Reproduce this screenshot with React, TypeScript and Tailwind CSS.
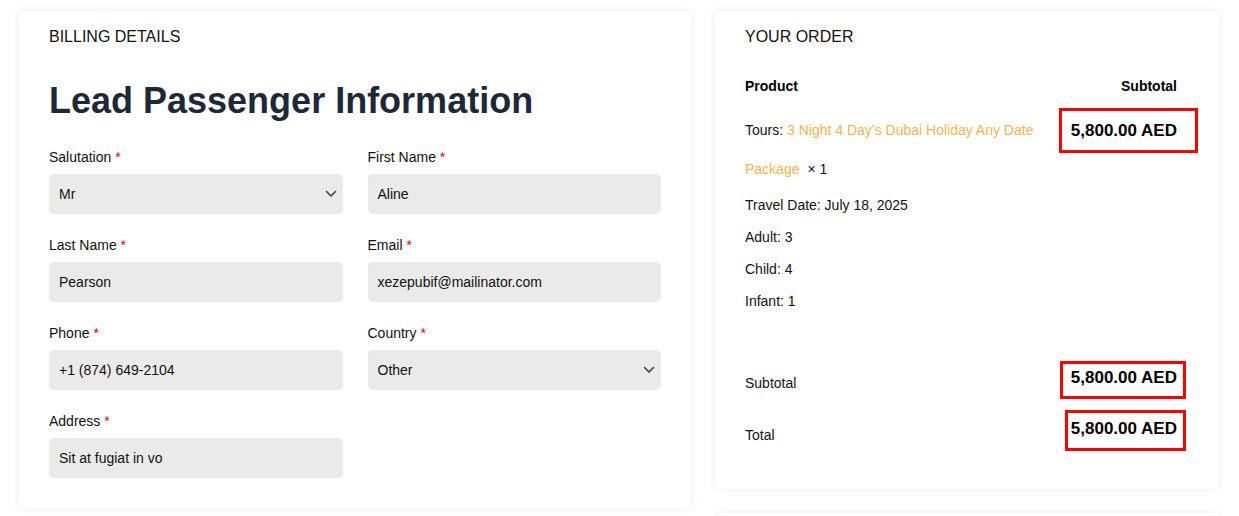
import React from "react";

const font = { fontFamily: '"Liberation Sans", Arial, sans-serif' };

function Chevron() {
  return (
    <svg width="12" height="8" viewBox="0 0 12 8" fill="none" className="text-[#374151]">
      <path d="M1.5 1.5L6 6L10.5 1.5" stroke="currentColor" strokeWidth="1.6" strokeLinecap="round" strokeLinejoin="round" />
    </svg>
  );
}

function Field({ label, value, select }: { label: string; value: string; select?: boolean }) {
  return (
    <div className="flex flex-col">
      <div className="text-[14px] leading-[20px] text-[#111]">
        {label} <span className="text-[#e10000]">*</span>
      </div>
      <div className="mt-[7px] flex h-[40px] items-center justify-between rounded-[5px] bg-[#eaeaea] pl-[10px] pr-[6px] text-[14px] text-[#111]">
        <span>{value}</span>
        {select && <Chevron />}
      </div>
    </div>
  );
}

function Boxed({ children, box }: { children: React.ReactNode; box: string }) {
  return (
    <span className="relative inline-block text-[17px] font-bold leading-[20px] text-black">
      {children}
      <span className={`pointer-events-none absolute border-[3px] border-[#ff0000] ${box}`} />
    </span>
  );
}

export default function App() {
  return (
    <div className="min-h-screen bg-white" style={font}>
      <div className="flex items-start gap-[24px] pl-[19px] pt-[11px]">
        {/* Billing */}
        <div className="w-[672px] rounded-[6px] bg-white px-[30px] pb-[30px] pt-[16px] shadow-[0_0_8px_rgba(0,0,0,0.08)]">
          <div className="text-[16px] leading-[20px] text-[#111]">BILLING DETAILS</div>
          <h1 className="mt-[32px] text-[36px] font-bold leading-[44px] text-[#1d2939]">Lead Passenger Information</h1>
          <div className="mt-[24px] grid grid-cols-2 gap-x-[25px] gap-y-[21px]">
            <Field label="Salutation" value="Mr" select />
            <Field label="First Name" value="Aline" />
            <Field label="Last Name" value="Pearson" />
            <Field label="Email" value="xezepubif@mailinator.com" />
            <Field label="Phone" value="+1 (874) 649-2104" />
            <Field label="Country" value="Other" select />
            <Field label="Address" value="Sit at fugiat in vo" />
          </div>
        </div>

        {/* Order */}
        <div className="flex w-[504px] flex-col gap-[24px]">
          <div className="rounded-[6px] bg-white pb-[44px] pl-[30px] pr-[42px] pt-[16px] shadow-[0_0_8px_rgba(0,0,0,0.08)]">
            <div className="text-[16px] leading-[20px] text-[#111]">YOUR ORDER</div>
            <div className="mt-[29px] flex justify-between text-[14px] font-bold leading-[20px] text-black">
              <span>Product</span>
              <span>Subtotal</span>
            </div>
            <div className="mt-[15px] flex justify-between">
              <div className="w-[295px] text-[14px] leading-[39px] text-[#111]">
                Tours: <span className="text-[#f4b350]">3 Night 4 Day’s Dubai Holiday Any Date Package</span>
                <span className="ml-[8px]">× 1</span>
              </div>
              <div className="mt-[8px]">
                <Boxed box="-left-[12px] -right-[21px] -top-[13px] -bottom-[12px]">5,800.00 AED</Boxed>
              </div>
            </div>
            <div className="text-[14px] leading-[32px] text-[#111]">
              <div>Travel Date: July 18, 2025</div>
              <div>Adult: 3</div>
              <div>Child: 4</div>
              <div>Infant: 1</div>
            </div>
            <div className="mt-[51px] flex justify-between">
              <span className="pt-[5px] text-[14px] leading-[20px] text-[#111]">Subtotal</span>
              <Boxed box="-left-[11px] -right-[9px] -top-[7px] -bottom-[6px]">5,800.00 AED</Boxed>
            </div>
            <div className="mt-[26px] flex justify-between">
              <span className="pt-[6px] text-[14px] leading-[20px] text-[#111]">Total</span>
              <Boxed box="-left-[6px] -right-[9px] -top-[9px] -bottom-[6px]">5,800.00 AED</Boxed>
            </div>
          </div>
          <div className="h-[60px] rounded-[6px] bg-white shadow-[0_0_8px_rgba(0,0,0,0.08)]" />
        </div>
      </div>
    </div>
  );
}
